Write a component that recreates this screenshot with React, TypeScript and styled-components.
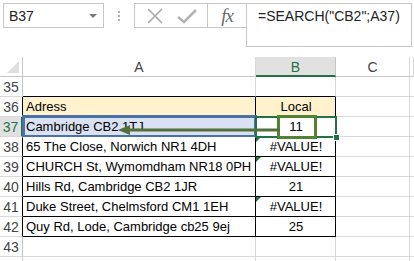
import React from "react";
import styled, { createGlobalStyle } from "styled-components";

const GlobalStyle = createGlobalStyle`
  html, body {
    margin: 0;
    padding: 0;
    background: #fff;
  }
  body {
    font-family: "Liberation Sans", Arial, sans-serif;
    overflow: hidden;
  }
`;

const Page = styled.div`
  width: 414px;
  height: 261px;
  overflow: hidden;
  background: #fff;
`;

// ---- formula bar ----
const FormulaBar = styled.div`
  display: flex;
  align-items: flex-start;
  height: 57px;
  padding: 3px 2px 0 3px;
  box-sizing: border-box;
`;

const NameBox = styled.div`
  width: 101px;
  height: 25px;
  box-sizing: border-box;
  border: 1px solid #c6c6c6;
  display: flex;
  align-items: center;
  justify-content: space-between;
  padding: 0 6px 0 5px;
  font-size: 14px;
  color: #222;
`;

const DropArrow = styled.span`
  width: 0;
  height: 0;
  border-left: 4px solid transparent;
  border-right: 4px solid transparent;
  border-top: 4px solid #7a7a7a;
`;

const Grip = styled.div`
  width: 30px;
  height: 25px;
  display: flex;
  flex-direction: column;
  align-items: center;
  justify-content: center;
  gap: 2px;
  span {
    width: 2px;
    height: 2px;
    background: #b0b0b0;
  }
`;

const IconBox = styled.div<{ $w: number }>`
  width: ${(p) => p.$w}px;
  height: 25px;
  box-sizing: border-box;
  border: 1px solid #c6c6c6;
  border-right: none;
  display: flex;
  align-items: center;
  justify-content: space-around;
  padding: 0 4px;
`;

const Fx = styled.span`
  font-family: "Liberation Serif", "Times New Roman", serif;
  font-style: italic;
  font-size: 19px;
  color: #6a6a6a;
  letter-spacing: -1px;
`;

const FormulaInput = styled.div`
  flex: 1;
  height: 44px;
  box-sizing: border-box;
  border: 1px solid #c6c6c6;
  padding: 4px 0 0 11px;
  font-size: 14px;
  color: #222;
`;

// ---- sheet ----
const Sheet = styled.div`
  position: relative;
  display: grid;
  grid-template-columns: 23px 233px 80px 74px 4px;
  grid-auto-rows: 20px;
`;

const Cell = styled.div<{ $bg?: string; $right?: string; $bottom?: string; $center?: boolean }>`
  position: relative;
  box-sizing: border-box;
  border-right: 1px solid ${(p) => p.$right ?? "#d9d9d9"};
  border-bottom: 1px solid ${(p) => p.$bottom ?? "#d9d9d9"};
  background: ${(p) => p.$bg ?? "#fff"};
  font-size: 13px;
  line-height: 20px;
  padding: 0 2px 0 3px;
  color: #000;
  text-align: ${(p) => (p.$center ? "center" : "left")};
  white-space: nowrap;
`;

const Clip = styled.span`
  display: block;
  overflow: hidden;
`;

const Corner = styled.div`
  position: relative;
  box-sizing: border-box;
  border-right: 1px solid #c6c6c6;
  border-bottom: 1px solid #c6c6c6;
  &::after {
    content: "";
    position: absolute;
    right: 3px;
    bottom: 3px;
    width: 0;
    height: 0;
    border-left: 12px solid transparent;
    border-bottom: 12px solid #dfdfdf;
  }
`;

const ColHead = styled.div<{ $active?: boolean }>`
  box-sizing: border-box;
  border-right: 1px solid ${(p) => (p.$active ? "#c6c6c6" : "#d9d9d9")};
  border-bottom: ${(p) => (p.$active ? "2px solid #217346" : "1px solid #c6c6c6")};
  background: ${(p) => (p.$active ? "#e1e1e1" : "#fff")};
  color: ${(p) => (p.$active ? "#217346" : "#444")};
  font-size: 14px;
  line-height: 20px;
  text-align: center;
`;

const RowHead = styled.div<{ $active?: boolean; $edge?: string }>`
  box-sizing: border-box;
  border-right: ${(p) => (p.$active ? "2px solid #217346" : `1px solid ${p.$edge ?? "#c6c6c6"}`)};
  border-bottom: 1px solid #d9d9d9;
  background: ${(p) => (p.$active ? "#e1e1e1" : "#fff")};
  color: ${(p) => (p.$active ? "#217346" : "#444")};
  font-size: 14px;
  line-height: 20px;
  text-align: center;
`;

const RefFrame = styled.div`
  position: absolute;
  left: -1px;
  top: -2px;
  right: -2px;
  bottom: -2px;
  border: 3px solid #4a72a6;
  pointer-events: none;
`;

const ActiveFrame = styled.div`
  position: absolute;
  left: -1px;
  top: -1px;
  right: -2px;
  bottom: -2px;
  border: 2px solid #217346;
  z-index: 2;
  &::after {
    content: "";
    position: absolute;
    right: -5px;
    bottom: -5px;
    width: 5px;
    height: 5px;
    background: #217346;
    border: 1px solid #fff;
  }
`;

const PrecedentBox = styled.div`
  position: absolute;
  left: 21px;
  top: -2px;
  width: 40px;
  height: 24px;
  box-sizing: border-box;
  border: 3px solid #548235;
  z-index: 3;
`;

const ErrorMark = styled.span`
  position: absolute;
  left: 0;
  top: 0;
  width: 0;
  height: 0;
  border-top: 5px solid #217346;
  border-right: 5px solid transparent;
`;

const Arrow = styled.svg`
  position: absolute;
  left: 118px;
  top: 67px;
  z-index: 4;
`;

const GRID = "#d9d9d9";
const LINE = "#000";

type Row = { n: number; a?: string; b?: string; err?: boolean };

const rows: Row[] = [
  { n: 38, a: "65 The Close, Norwich NR1 4DH", b: "#VALUE!", err: true },
  { n: 39, a: "CHURCH St, Wymomdham NR18 0PH", b: "#VALUE!", err: true },
  { n: 40, a: "Hills Rd, Cambridge CB2 1JR", b: "21" },
  { n: 41, a: "Duke Street, Chelmsford CM1 1EH", b: "#VALUE!", err: true },
  { n: 42, a: "Quy Rd, Lode, Cambridge cb25 9ej", b: "25" },
];

export default function App() {
  return (
    <Page>
      <GlobalStyle />
      <FormulaBar>
        <NameBox>
          B37
          <DropArrow />
        </NameBox>
        <Grip>
          <span />
          <span />
          <span />
        </Grip>
        <IconBox $w={73}>
          <svg width="18" height="16" viewBox="0 0 18 16">
            <path d="M2 1 L16 15 M16 1 L2 15" stroke="#a9a9a9" strokeWidth="1.6" fill="none" />
          </svg>
          <svg width="20" height="16" viewBox="0 0 20 16">
            <path d="M1 9 L7 14 L19 2" stroke="#b4b4b4" strokeWidth="2.6" fill="none" />
          </svg>
        </IconBox>
        <IconBox $w={39}>
          <Fx>fx</Fx>
        </IconBox>
        <FormulaInput>=SEARCH("CB2";A37)</FormulaInput>
      </FormulaBar>

      <Sheet>
        <Corner />
        <ColHead>A</ColHead>
        <ColHead $active>B</ColHead>
        <ColHead>C</ColHead>
        <ColHead />

        <RowHead>35</RowHead>
        <Cell $bottom={LINE} />
        <Cell $bottom={LINE} />
        <Cell />
        <Cell />

        <RowHead $edge={LINE}>36</RowHead>
        <Cell $bg="#fff2cc" $right={LINE} $bottom={LINE}>
          Adress
        </Cell>
        <Cell $bg="#fff2cc" $right={LINE} $bottom={LINE} $center>
          Local
        </Cell>
        <Cell />
        <Cell />

        <RowHead $active>37</RowHead>
        <Cell $bg="#d9e1f2" $right={LINE} $bottom={LINE}>
          Cambridge CB2 1TJ
          <RefFrame />
        </Cell>
        <Cell $right={LINE} $bottom={LINE} $center>
          11
          <PrecedentBox />
          <ActiveFrame />
        </Cell>
        <Cell />
        <Cell />

        {rows.map((r) => (
          <React.Fragment key={r.n}>
            <RowHead $edge={LINE}>{r.n}</RowHead>
            <Cell $right={LINE} $bottom={LINE}>
              <Clip>{r.a}</Clip>
            </Cell>
            <Cell $right={LINE} $bottom={LINE} $center>
              {r.err && <ErrorMark />}
              {r.b}
            </Cell>
            <Cell />
            <Cell />
          </React.Fragment>
        ))}

        <RowHead>43</RowHead>
        <Cell />
        <Cell $right={GRID} />
        <Cell />
        <Cell />

        <RowHead />
        <Cell />
        <Cell />
        <Cell />
        <Cell />

        <Arrow width="162" height="12" viewBox="0 0 162 12">
          <line x1="8" y1="6" x2="162" y2="6" stroke="#52703a" strokeWidth="3" />
          <polygon points="0,6 12,1 12,11" fill="#52703a" />
        </Arrow>
      </Sheet>
    </Page>
  );
}
